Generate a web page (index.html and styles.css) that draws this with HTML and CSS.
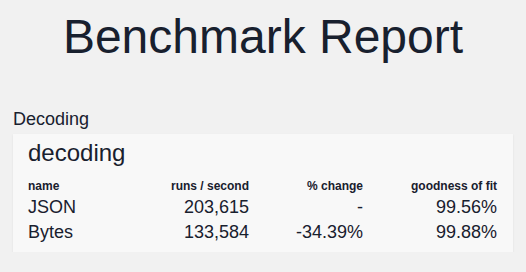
FILE: index.html
```html
<!DOCTYPE html>
<html>
<head>
<meta charset="utf-8">
<link rel="stylesheet" href="styles.css">
</head>
<body>
<h1 class="title">Benchmark Report</h1>
<h2 class="group-label">Decoding</h2>
<section class="card">
  <h3 class="card-title">decoding</h3>
  <div class="results">
    <div class="head">name</div>
    <div class="head num">runs / second</div>
    <div class="head num">% change</div>
    <div class="head num">goodness of fit</div>
    <div class="cell">JSON</div>
    <div class="cell num">203,615</div>
    <div class="cell num">-</div>
    <div class="cell num">99.56%</div>
    <div class="cell">Bytes</div>
    <div class="cell num">133,584</div>
    <div class="cell num">-34.39%</div>
    <div class="cell num">99.88%</div>
  </div>
</section>
</body>
</html>
```
FILE: styles.css
```css
html, body {
  margin: 0;
  padding: 0;
}
body {
  background: #f1f1f1;
  color: #18202e;
  font-family: "Liberation Sans", Arial, sans-serif;
  padding: 0 13px;
}
.title {
  margin: 9px 0 0;
  font-size: 48px;
  line-height: 55px;
  font-weight: normal;
  text-align: center;
}
.group-label {
  margin: 45px 0 0;
  font-size: 18px;
  line-height: 21px;
  font-weight: normal;
}
.card {
  margin-top: 4px;
  background: #f8f8f8;
  padding: 5px 16px 7px 15px;
  box-shadow: 0 1px 2px rgba(0, 0, 0, 0.08);
}
.card-title {
  margin: 0;
  font-size: 24px;
  line-height: 28px;
  font-weight: normal;
}
.results {
  margin-top: 12px;
  display: grid;
  grid-template-columns: 1fr 121px 114px 134px;
}
.head {
  font-size: 12px;
  line-height: 14px;
  font-weight: bold;
  margin-bottom: 2px;
}
.cell {
  font-size: 18px;
  line-height: 25px;
}
.num {
  text-align: right;
}
```
